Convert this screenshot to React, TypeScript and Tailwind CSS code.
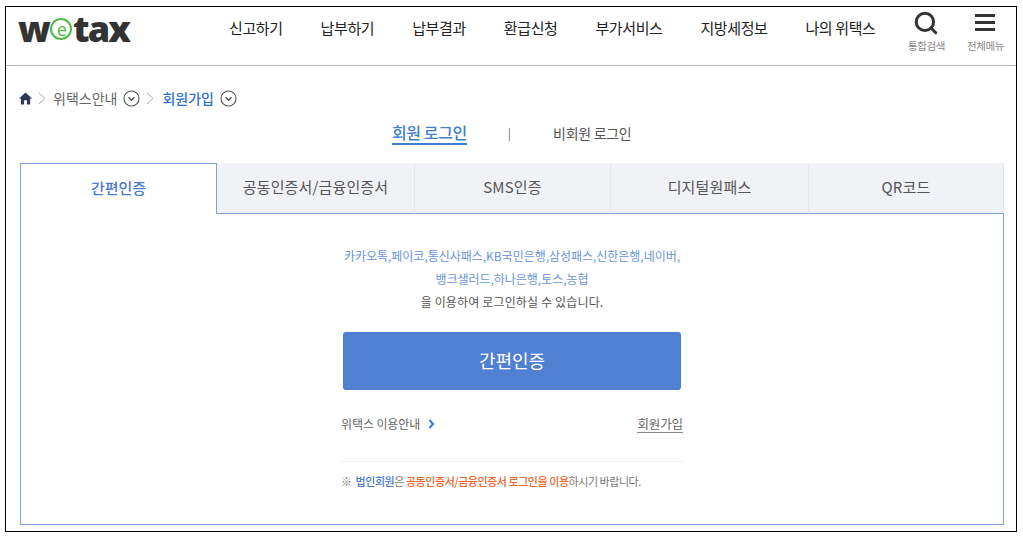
import { Search } from 'lucide-react'

const NAV = ['신고하기', '납부하기', '납부결과', '환급신청', '부가서비스', '지방세정보', '나의 위택스']
const TABS = [
  { label: '공동인증서/금융인증서', width: 'w-[198px]' },
  { label: 'SMS인증', width: 'w-[196px]' },
  { label: '디지털원패스', width: 'w-[198px]' },
  { label: 'QR코드', width: 'w-[195px]' },
]

function CircleChevron() {
  return (
    <svg width="17" height="17" viewBox="0 0 17 17" fill="none" stroke="#555" strokeWidth="1.1">
      <circle cx="8.5" cy="8.5" r="7.5" />
      <path d="M5.5 7.2l3 3 3-3" strokeWidth="1.5" />
    </svg>
  )
}

function Crumb() {
  return (
    <svg width="8" height="13" viewBox="0 0 8 13" fill="none" stroke="#aaa" strokeWidth="1">
      <path d="M1 1l6 5.5-6 5.5" />
    </svg>
  )
}

export default function App() {
  return (
    <div className="h-[538px] w-[1023px] bg-white px-[5px] pb-[6px] pt-[6px] font-['Noto_Sans_CJK_KR',sans-serif]">
      <div className="h-[526px] w-[1012px] border border-black">
        <header className="flex h-[59px] items-start border-b border-[#b4bac8]">
          <div className="ml-[12px] flex h-[43px] w-[200px] items-center font-['Open_Sans',sans-serif] text-[36px] font-extrabold tracking-[-1.8px] text-[#333]">
            <span>w</span>
            <span className="mx-[1px] flex h-[22px] w-[22px] items-center justify-center rounded-full border-2 border-[#55b948] text-[18px] font-normal leading-none text-[#55b948]">e</span>
            <span>tax</span>
          </div>
          <nav className="ml-[11px] flex h-[43px] items-center gap-[38px] text-[15px] tracking-[-0.4px] text-[#222]">
            {NAV.map((n) => <span key={n}>{n}</span>)}
          </nav>
          <div className="ml-[31px] flex w-[40px] flex-col items-center pt-[3px]">
            <Search className="h-[26px] w-[26px] text-[#333]" strokeWidth={2.8} />
            <span className="mt-[3px] whitespace-nowrap text-[10.5px] leading-[14px] tracking-[-0.4px] text-[#888]">통합검색</span>
          </div>
          <div className="ml-[19px] flex w-[40px] flex-col items-center pt-[7px]">
            <div className="flex h-[17px] w-[20px] flex-col justify-between">
              <div className="h-[3px] bg-[#333]" />
              <div className="h-[3px] bg-[#333]" />
              <div className="h-[3px] bg-[#333]" />
            </div>
            <span className="mt-[8px] whitespace-nowrap text-[10.5px] leading-[14px] tracking-[-0.4px] text-[#888]">전체메뉴</span>
          </div>
        </header>

        <div className="flex h-[44px] items-end pl-[13px] text-[14px] text-[#666]">
          <div className="flex h-[24px] items-center gap-[6px]">
            <svg width="13" height="13" viewBox="0 0 14 13" fill="#2b3a55">
              <path d="M7 0L0 6.5h2V13h3.5V8.500h3V13H12V6.500h2z" />
            </svg>
            <Crumb />
            <span className="ml-[1px]">위택스안내</span>
            <CircleChevron />
            <Crumb />
            <span className="ml-[2px] font-medium text-[#2f6fd0]">회원가입</span>
            <CircleChevron />
          </div>
        </div>

        <div className="flex h-[44px] items-center pl-[386px] pt-[2px]">
          <span className="border-b-2 border-[#3f7fd0] text-[16px] font-medium leading-[21px] tracking-[-0.4px] text-[#3f7fd0]">회원 로그인</span>
          <span className="ml-[41px] text-[12px] text-[#777]">|</span>
          <span className="ml-[42px] text-[14px] tracking-[-0.3px] text-[#555]">비회원 로그인</span>
        </div>

        <div className="ml-[14px] mt-[9px] flex h-[51px] w-[984px]">
          <div className="flex w-[197px] items-center justify-center border-x border-t border-[#7d9fde] bg-white pb-[2px] text-[15px] font-medium text-[#4a7bd0]">
            간편인증
          </div>
          {TABS.map((t) => (
            <div
              key={t.label}
              className={`flex ${t.width} items-center justify-center border-b border-r border-b-[#7d9fde] border-r-[#e4e6ea] bg-[#f1f2f5] pb-[2px] text-[15px] tracking-[0.15px] text-[#555]`}
            >
              {t.label}
            </div>
          ))}
        </div>

        <main className="ml-[14px] flex h-[311px] w-[984px] flex-col items-center border-x border-b border-[#7d9fde] pt-[30px]">
          <div className="text-center text-[12px] leading-[23px] tracking-[-0.03px] text-[#6a94d8]">
            <p>카카오톡,페이코,통신사패스,KB국민은행,삼성패스,신한은행,네이버,</p>
            <p>뱅크샐러드,하나은행,토스,농협</p>
            <p className="tracking-[0.15px] text-[#555]">을 이용하여 로그인하실 수 있습니다.</p>
          </div>
          <button className="mt-[19px] h-[58px] w-[338px] rounded-[3px] bg-[#4f80d1] pb-[2px] text-[18px] text-white">간편인증</button>
          <div className="mt-[25px] flex w-[342px] items-center justify-between text-[12px] tracking-[-0.1px] text-[#666]">
            <span className="flex items-center gap-[8px]">
              위택스 이용안내
              <svg width="7" height="10" viewBox="0 0 7 10" fill="none" stroke="#3f74c8" strokeWidth="2">
                <path d="M1.500 1l3.500 4-3.500 4" />
              </svg>
            </span>
            <span className="border-b border-[#888] text-[12.5px] leading-[16px]">회원가입</span>
          </div>
          <div className="mt-[28px] w-[342px] border-t border-[#eeeeee] pt-[11px] text-[11px] tracking-[-0.45px] text-[#777]">
            ※ <span className="ml-[2px] font-medium text-[#4a7bd0]">법인회원</span>은{' '}
            <span className="font-medium text-[#f0662a]">공동인증서/금융인증서 로그인을 이용</span>하시기 바랍니다.
          </div>
        </main>
      </div>
    </div>
  )
}
